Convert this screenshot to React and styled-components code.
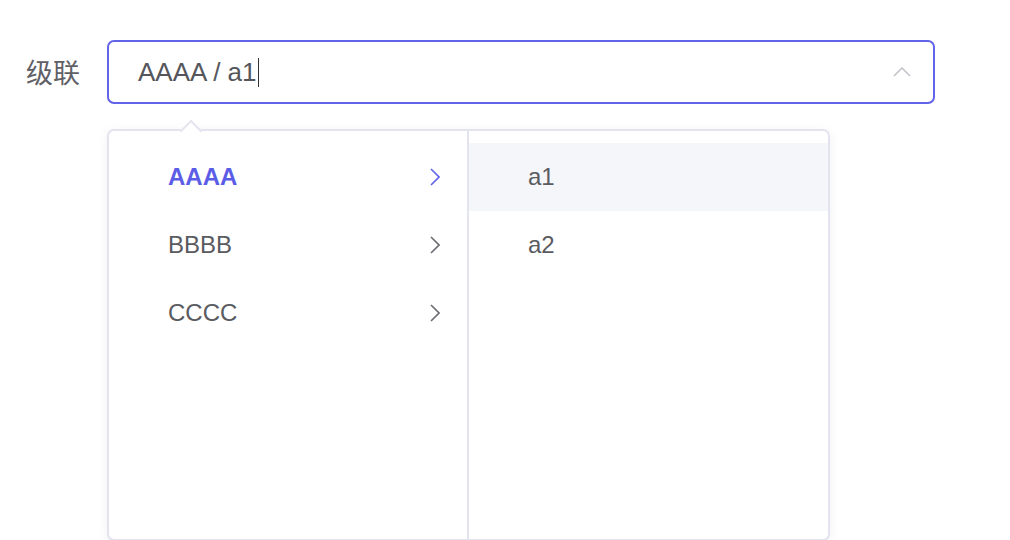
import React from "react";
import styled, { createGlobalStyle } from "styled-components";

const Global = createGlobalStyle`
  html, body { margin: 0; padding: 0; background: #fff; }
  body { font-family: "Liberation Sans", Arial, "Noto Sans CJK SC", sans-serif; }
`;

const Page = styled.div`
  padding: 40px 0 0 26px;
  width: 1010px;
  height: 540px;
  box-sizing: border-box;
  overflow: hidden;
`;

const Field = styled.div`
  display: flex;
  align-items: flex-start;
`;

const Label = styled.div`
  font-family: "Noto Sans CJK SC", sans-serif;
  font-size: 27px;
  color: #5f6066;
  width: 81px;
  height: 64px;
  line-height: 64px;
  flex: none;
`;

const Control = styled.div`
  display: flex;
  flex-direction: column;
  position: relative;
`;

const Input = styled.div`
  width: 828px;
  height: 64px;
  box-sizing: border-box;
  border: 2px solid #6163e8;
  border-radius: 7px;
  display: flex;
  align-items: center;
  padding: 0 22px 0 29px;
`;

const Value = styled.div`
  flex: 1;
  font-size: 26px;
  color: #55565c;
  display: flex;
  align-items: center;
`;

const Caret = styled.span`
  display: inline-block;
  width: 1.5px;
  height: 29px;
  background: #333;
  margin-left: 1px;
`;

const Panel = styled.div`
  margin-top: 25px;
  width: 723px;
  height: 412px;
  box-sizing: border-box;
  border: 2px solid #e3e4ee;
  border-radius: 7px;
  background: #fff;
  box-shadow: 0 2px 12px rgba(30, 35, 90, 0.06);
  display: flex;
  position: relative;
`;

const Pointer = styled.div`
  position: absolute;
  top: -8px;
  left: 74px;
  width: 14px;
  height: 14px;
  background: #fff;
  border-left: 2px solid #e3e4ee;
  border-top: 2px solid #e3e4ee;
  transform: rotate(45deg);
`;

const Column = styled.div`
  width: ${(p) => p.$w}px;
  flex: none;
  padding-top: 12px;
  box-sizing: border-box;
  border-right: ${(p) => (p.$divider ? "2px solid #e3e4ee" : "none")};
  border-radius: ${(p) => (p.$divider ? "7px 0 0 7px" : "0 7px 7px 0")};
`;

const Item = styled.div`
  height: 68px;
  display: flex;
  align-items: center;
  padding: 0 27px 0 59px;
  font-size: 24px;
  color: ${(p) => (p.$active ? "#5b5de6" : "#5a5b61")};
  font-weight: ${(p) => (p.$active ? 700 : 400)};
  background: ${(p) => (p.$hover ? "#f5f6fa" : "transparent")};
`;

const ItemText = styled.span`
  flex: 1;
`;

const Chevron = ({ color }) => (
  <svg width="10" height="18" viewBox="0 0 10 18" fill="none">
    <path d="M1 1 L9 9 L1 17" stroke={color} strokeWidth="1.6" />
  </svg>
);

const UpIcon = () => (
  <svg width="18" height="10" viewBox="0 0 18 10" fill="none">
    <path d="M1 9 L9 1 L17 9" stroke="#c4c5cb" strokeWidth="1.6" />
  </svg>
);

const left = [
  { label: "AAAA", active: true },
  { label: "BBBB" },
  { label: "CCCC" },
];
const right = [{ label: "a1", hover: true }, { label: "a2" }];

export default function App() {
  return (
    <>
      <Global />
      <Page>
        <Field>
          <Label>级联</Label>
          <Control>
            <Input>
              <Value>
                AAAA / a1
                <Caret />
              </Value>
              <UpIcon />
            </Input>
            <Panel>
              <Pointer />
              <Column $w={360} $divider>
                {left.map((it) => (
                  <Item key={it.label} $active={it.active}>
                    <ItemText>{it.label}</ItemText>
                    <Chevron color={it.active ? "#6063ea" : "#6b6c72"} />
                  </Item>
                ))}
              </Column>
              <Column $w={359}>
                {right.map((it) => (
                  <Item key={it.label} $hover={it.hover}>
                    <ItemText>{it.label}</ItemText>
                  </Item>
                ))}
              </Column>
            </Panel>
          </Control>
        </Field>
      </Page>
    </>
  );
}
